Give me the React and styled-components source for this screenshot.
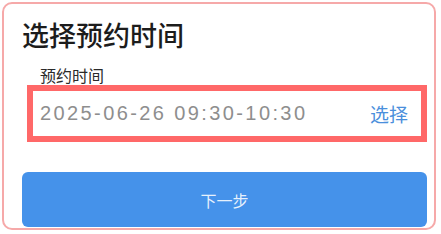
import React from "react";
import styled, { createGlobalStyle } from "styled-components";

const Global = createGlobalStyle`
  html, body { margin: 0; padding: 0; background: #ffffff; }
  body { font-family: "Noto Sans CJK SC", "Noto Sans", sans-serif; }
  * { box-sizing: border-box; }
`;

const Card = styled.div`
  margin: 2px 5px 0 2px;
  height: 228px;
  border: 2px solid #f6a9a9;
  border-radius: 10px;
  background: #ffffff;
  padding: 17px 7px 0 18px;
  display: flex;
  flex-direction: column;
`;

const Title = styled.h1`
  margin: 0;
  font-size: 27px;
  line-height: 28px;
  font-weight: 500;
  color: #1c1c1c;
`;

const Label = styled.div`
  margin: 16px 0 0 18px;
  font-size: 16px;
  line-height: 20px;
  color: #2a2a2a;
`;

const Field = styled.div`
  margin-left: 5px;
  height: 57px;
  border: 6px solid #ff6868;
  background: #ffffff;
  display: flex;
  align-items: center;
  justify-content: space-between;
  padding: 0 13px 0 7px;
`;

const Value = styled.span`
  font-family: "Liberation Sans", Arial, sans-serif;
  font-size: 20px;
  letter-spacing: 2.4px;
  color: #8e8e8e;
`;

const Pick = styled.span`
  font-size: 19px;
  color: #4a8fdc;
`;

const NextButton = styled.button`
  margin-top: 30px;
  height: 55px;
  width: 100%;
  border: none;
  border-radius: 6px;
  background: #4592ea;
  color: rgba(255, 255, 255, 0.88);
  font-family: "Noto Sans CJK SC", sans-serif;
  font-size: 16px;
  cursor: pointer;
`;

export default function App() {
  return (
    <>
      <Global />
      <Card>
        <Title>选择预约时间</Title>
        <Label>预约时间</Label>
        <Field>
          <Value>2025-06-26 09:30-10:30</Value>
          <Pick>选择</Pick>
        </Field>
        <NextButton>下一步</NextButton>
      </Card>
    </>
  );
}
